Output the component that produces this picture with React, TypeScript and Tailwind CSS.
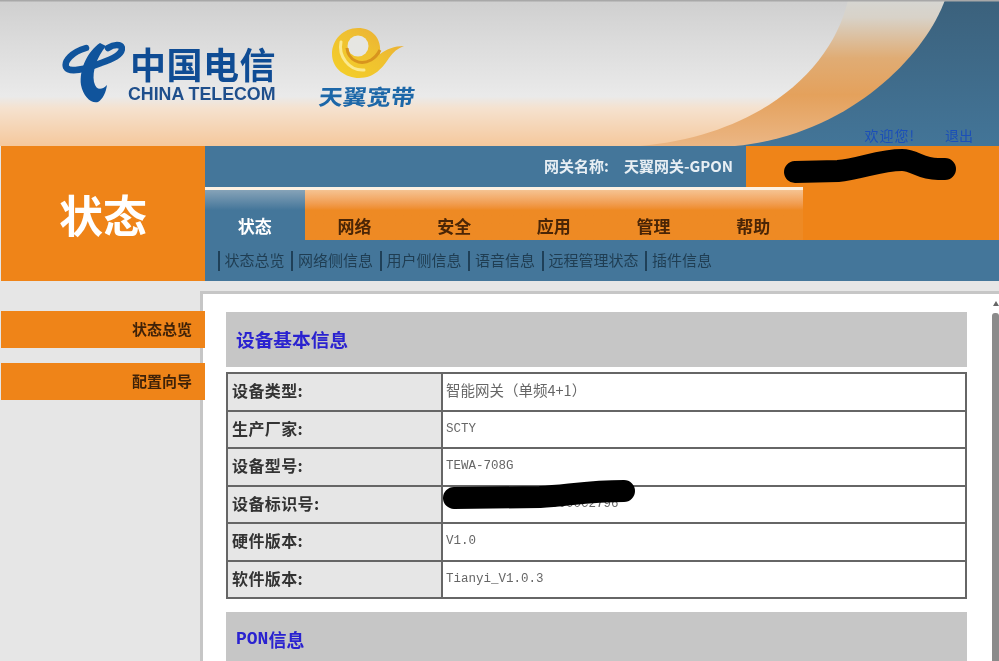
const CJK = "font-['Noto_Sans_CJK_SC','Noto_Sans',sans-serif]";

const subs = ["状态总览", "网络侧信息", "用户侧信息", "语音信息", "远程管理状态", "插件信息"];
const tabs = ["状态", "网络", "安全", "应用", "管理", "帮助"];
const rows = [
  ["设备类型:", "智能网关（单频4+1）"],
  ["生产厂家:", "SCTY"],
  ["设备型号:", "TEWA-708G"],
  ["设备标识号:", "000000000000000000C2796"],
  ["硬件版本:", "V1.0"],
  ["软件版本:", "Tianyi_V1.0.3"],
];

function BannerArt() {
  return (
    <svg className="absolute inset-0" width="999" height="146" viewBox="0 0 999 146">
      <defs>
        <linearGradient id="sky" x1="0" y1="0" x2="0" y2="1">
          <stop offset="0" stopColor="#3b617c" />
          <stop offset="1" stopColor="#437598" />
        </linearGradient>
        <linearGradient id="band" x1="0" y1="0" x2="0" y2="1">
          <stop offset="0" stopColor="#d6d6d2" />
          <stop offset="0.12" stopColor="#d8d2c8" />
          <stop offset="0.4" stopColor="#e0ac74" />
          <stop offset="0.65" stopColor="#e4a15c" />
          <stop offset="1" stopColor="#ebb684" />
        </linearGradient>
        <linearGradient id="pale" x1="0" y1="0" x2="0" y2="1">
          <stop offset="0" stopColor="#cfcfcf" />
          <stop offset="0.3" stopColor="#dcdcdc" />
          <stop offset="0.66" stopColor="#eaeaea" />
          <stop offset="0.74" stopColor="#f5e2cf" />
          <stop offset="1" stopColor="#f5c89c" />
        </linearGradient>
      </defs>
      <rect width="999" height="146" fill="url(#sky)" />
      <path d="M0 0 H945 C925 55 850 135 735 146 H0 Z" fill="url(#band)" />
      <path d="M0 0 H848 C832 70 760 135 640 146 H0 Z" fill="url(#pale)" />
      <rect width="999" height="1.5" fill="#a8a8a8" />
    </svg>
  );
}

function TelecomMark() {
  return (
    <svg width="64" height="64" viewBox="60 40 64 64" className="shrink-0">
      <path
        d="M85 47 C71 51 63 60 65 66 C68 72 85 68 100 62 C112 58 121 54 121 47 C120 43 113 43 107 47"
        fill="none"
        stroke="#10549c"
        strokeWidth="6.5"
        strokeLinecap="round"
      />
      <path
        d="M99 42 C87 50 78 68 80 84 C82 95 90 103 97 101 C102 98 105 91 106 84 C100 90 95 89 93 81 C91 70 96 56 105 45 Z"
        fill="#10549c"
      />
    </svg>
  );
}

function TianyiMark() {
  return (
    <svg width="74" height="53" viewBox="339 27 74 53">
      <defs>
        <linearGradient id="gold" x1="0" y1="1" x2="1" y2="0">
          <stop offset="0" stopColor="#f4d028" />
          <stop offset="0.55" stopColor="#efc030" />
          <stop offset="1" stopColor="#e8a838" />
        </linearGradient>
      </defs>
      <path
        d="M367 28 C352 28 341 40 341 54 C341 69 355 78 368 78 C384 78 392 67 398 58 C402 52 407 48 413 46 C403 46 396 49 389 54 C391 38 381 28 367 28 Z"
        fill="url(#gold)"
      />
      <path d="M350 42 C347 56 358 71 373 70" fill="none" stroke="#fbe98e" strokeWidth="3" strokeLinecap="round" />
      <ellipse cx="367" cy="46" rx="10.5" ry="10.5" fill="#e6e6e2" />
      <path d="M356 48 C357 60 369 66 380 60 C385 57 387 54 389 50" fill="none" stroke="#d8941e" strokeWidth="3" />
    </svg>
  );
}

function App() {
  return (
    <div className={`w-[999px] h-[661px] overflow-hidden relative bg-[#e6e6e6] blur-[0.5px] ${CJK}`}>
      <header className="relative h-[146px]">
        <BannerArt />
        <div className="relative flex items-start h-full pl-[61px] pt-[41px]">
          <TelecomMark />
          <div className="ml-[3px] flex flex-col items-start text-[#0f4c94]">
            <div className="text-[36px] leading-[44px] font-bold tracking-[0.5px] whitespace-nowrap ml-[2px]">中国电信</div>
            <div className="font-['Liberation_Sans',sans-serif] text-[17.8px] leading-[19px] font-bold text-[#1f4f8c] whitespace-nowrap">CHINA TELECOM</div>
          </div>
          <div className="ml-[43px] -mt-[14px] flex flex-col items-center">
            <TianyiMark />
            <div className="text-[24px] leading-[30px] font-bold text-[#1c67a8] whitespace-nowrap -skew-x-6 scale-y-90 mt-[1px]">天翼宽带</div>
          </div>
        </div>
        <div className="absolute right-[26px] bottom-[2px] flex gap-[30px] text-[14px] leading-[18px] text-[#1b4fb8]">
          <span className="tracking-[1px]">欢迎您!</span>
          <span>退出</span>
        </div>
      </header>

      <section className="flex h-[135px]">
        <div className="w-[205px] border-l border-[#e6e6e6] bg-[#ef8418] flex items-center justify-center text-white text-[44px] font-bold">状态</div>
        <div className="flex-1 flex flex-col">
          <div className="flex h-[41px]">
            <div className="flex-1 bg-[#44769a] flex items-center justify-end pr-[13px] gap-[15px] text-[15px] font-bold text-[#e8eff4]">
              <span>网关名称:</span>
              <span>天翼网关-GPON</span>
            </div>
            <div className="w-[253px] bg-[#ef8418]" />
          </div>
          <div className="h-[53px] bg-[#ef8418] flex">
            <div className="w-[598px] grid grid-cols-6">
              {tabs.map((t, i) => (
                <div
                  key={t}
                  className={`border-t-[3px] border-[#fdf1e2] flex items-end justify-center pb-[1px] text-[17px] leading-[26px] font-bold ${
                    i === 0
                      ? "bg-gradient-to-b from-[#86a3b8] to-[#44769a] to-40% text-white"
                      : "bg-gradient-to-b from-[#f5c391] to-[#ee8a24] to-40% text-[#4a2506]"
                  }`}
                >
                  {t}
                </div>
              ))}
            </div>
          </div>
          <div className="flex-1 bg-[#44769a] flex items-center pl-[12.5px] text-[15px] text-[#1f3d52]">
            {subs.map((s) => (
              <div key={s} className="flex items-center h-[20px] border-l-2 border-[#1f4058] pl-[5px] pr-[6.5px] whitespace-nowrap">
                {s}
              </div>
            ))}
          </div>
        </div>
      </section>

      <div className="flex h-[380px] pt-[10px]">
        <aside className="w-[200px] pt-[20px] flex flex-col gap-[15px] relative z-10">
          {["状态总览", "配置向导"].map((s) => (
            <div key={s} className="w-[205px] h-[37px] border-l border-[#e6e6e6] bg-[#ef8418] flex items-center justify-end pr-[13px] text-[15px] font-bold text-[#3f2208]">
              {s}
            </div>
          ))}
        </aside>
        <main className="flex-1 flex bg-white border-l-[3px] border-t-[3px] border-[#c6c6c6] pl-[23px]">
          <div className="w-[741px] pt-[18px]">
            <div className="h-[55px] bg-[#c6c6c6] flex items-center pl-[10px] text-[18.7px] font-bold text-[#2a22d0]">设备基本信息</div>
            <table className="mt-[5px] w-full border-collapse border-2 border-[#3f3f3f] table-fixed">
              <tbody>
                {rows.map(([k, v]) => (
                  <tr key={k} className="h-[37.5px]">
                    <td className="w-[215px] bg-[#e6e6e6] border-2 border-[#666] pl-[4px] pb-[3px] text-[16px] font-bold text-[#333]">
                      <span className="tracking-[0.4px]">{k}</span>
                    </td>
                    <td className={`border-2 border-[#666] pl-[3px] text-[12.5px] text-[#666] whitespace-nowrap ${v.startsWith("智") ? "pb-[3px]" : "font-['Liberation_Mono',monospace]"}`}>
                      {v.startsWith("智") ? <span className="text-[14.5px]">{v}</span> : v}
                    </td>
                  </tr>
                ))}
              </tbody>
            </table>
            <div className="mt-[13px] h-[55px] bg-[#c6c6c6] flex items-center pl-[10px] text-[18px] font-bold text-[#2a22d0]">
              <span className="font-['Liberation_Mono',monospace] font-bold text-[18px]">PON</span>信息
            </div>
          </div>
          <div className="ml-[25px] w-[7px] flex flex-col items-center pt-[7px]">
            <div className="w-0 h-0 border-x-[3px] border-x-transparent border-b-[5px] border-b-[#666]" />
            <div className="mt-[7px] w-full flex-1 bg-[#8b8b8b] rounded-t-[3px]" />
          </div>
        </main>
      </div>

      <svg className="absolute inset-0 pointer-events-none" width="999" height="661" viewBox="0 0 999 661">
        <g fill="none" stroke="#000" strokeWidth="22" strokeLinecap="round">
          <path d="M795 172 L838 171 C860 169 880 160 902 160 C915 160 920 169 938 169 L945 169" />
          <path d="M454 498 L540 497 C570 495 590 491 624 491" />
        </g>
      </svg>
    </div>
  );
}

export default App;
